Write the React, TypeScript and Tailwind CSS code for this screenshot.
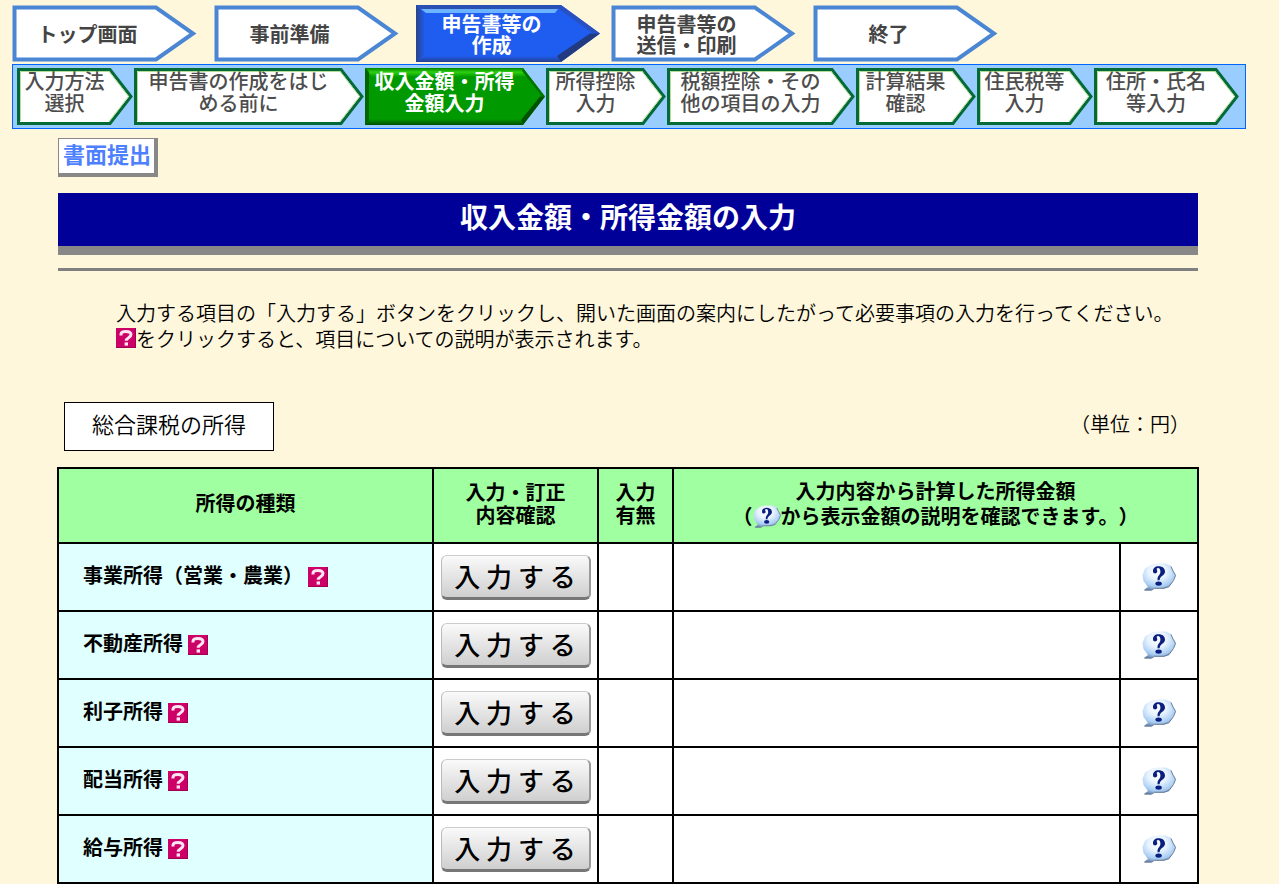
import React from 'react';
import clsx from 'clsx';

type Step = { label: string; width: number; size: string; active?: boolean };

const mainSteps: Step[] = [
  { label: 'トップ画面', width: 185, size: 'w-[185px]' },
  { label: '事前準備', width: 185, size: 'w-[185px]' },
  { label: '申告書等の\n作成', width: 185, size: 'w-[185px]', active: true },
  { label: '申告書等の\n送信・印刷', width: 185, size: 'w-[185px]' },
  { label: '終了', width: 185, size: 'w-[185px]' },
];

const subSteps: Step[] = [
  { label: '入力方法\n選択', width: 117, size: 'w-[117px]' },
  { label: '申告書の作成をはじ\nめる前に', width: 231, size: 'w-[231px]' },
  { label: '収入金額・所得\n金額入力', width: 181, size: 'w-[181px]', active: true },
  { label: '所得控除\n入力', width: 121, size: 'w-[121px]' },
  { label: '税額控除・その\n他の項目の入力', width: 189, size: 'w-[189px]' },
  { label: '計算結果\n確認', width: 121, size: 'w-[121px]' },
  { label: '住民税等\n入力', width: 117, size: 'w-[117px]' },
  { label: '住所・氏名\n等入力', width: 146, size: 'w-[146px]' },
];

const incomeTypes = ['事業所得（営業・農業） ', '不動産所得 ', '利子所得 ', '配当所得 ', '給与所得 '];

const MainArrow: React.FC<{ width: number; active?: boolean }> = ({ width: w, active }) => (
  <svg className="absolute inset-0" width={w} height="57" aria-hidden="true">
    {active ? (
      <>
        <defs>
          <linearGradient id="main-left" x1="0" x2="1">
            <stop offset="0" stopColor="#2a4488" />
            <stop offset="1" stopColor="#2058e4" />
          </linearGradient>
          <linearGradient id="main-bottom" x1="0" y1="1" x2="0" y2="0">
            <stop offset="0" stopColor="#263f8c" />
            <stop offset="1" stopColor="#1f5cf0" />
          </linearGradient>
        </defs>
        <path d={`M0 0H${w - 40}L${w - 1} 28.5L${w - 40} 57H0Z`} fill="#1f5cf0" />
        <path d={`M0 0H${w - 40}L${w - 43} 4H5Z`} fill="#2a50b4" />
        <path d={`M5 4H${w - 43}L${w - 46} 8H10Z`} fill="#6cb4ff" />
        <path d="M0 0L8 8V50L0 57Z" fill="url(#main-left)" />
        <path d={`M0 57L7 51H${w - 44}L${w - 40} 57Z`} fill="url(#main-bottom)" />
        <path d={`M${w - 40} 0L${w - 1} 28.5L${w - 8} 28.5L${w - 42} 4Z`} fill="#2850c0" />
        <path d={`M${w - 1} 28.5L${w - 40} 57L${w - 44} 51L${w - 11} 28.5Z`} fill="#213a80" />
      </>
    ) : (
      <path
        d={`M2.5 2.5H${w - 41}L${w - 4} 28.5L${w - 41} 54.5H2.5Z`}
        fill="#ffffff"
        stroke="#4a86d4"
        strokeWidth="4"
      />
    )}
  </svg>
);

const SubArrow: React.FC<{ width: number; active?: boolean }> = ({ width: w, active }) => (
  <svg className="absolute inset-0" width={w} height="57" aria-hidden="true">
    {active ? (
      <>
        <defs>
          <linearGradient id="sub-top" x1="0" y1="0" x2="0" y2="1">
            <stop offset="0" stopColor="#008000" />
            <stop offset="0.45" stopColor="#2ed010" />
            <stop offset="1" stopColor="#009900" />
          </linearGradient>
          <linearGradient id="sub-bottom" x1="0" y1="1" x2="0" y2="0">
            <stop offset="0" stopColor="#004d00" />
            <stop offset="1" stopColor="#009900" />
          </linearGradient>
        </defs>
        <path d={`M0 0H${w - 23}L${w - 1} 28.5L${w - 23} 57H0Z`} fill="#009900" />
        <path d={`M0 0H${w - 23}L${w - 20} 9H7Z`} fill="url(#sub-top)" />
        <path d="M0 0L4 4V53L0 57Z" fill="#006600" />
        <path d={`M0 57L5 51H${w - 26}L${w - 23} 57Z`} fill="url(#sub-bottom)" />
        <path d={`M${w - 23} 0L${w - 1} 28.5H${w - 4}L${w - 24} 3Z`} fill="#007400" />
        <path d={`M${w - 1} 28.5L${w - 23} 57L${w - 25} 52L${w - 6} 28.5Z`} fill="#005200" />
      </>
    ) : (
      <>
        <path
          d={`M1.5 1.5H${w - 24}L${w - 3} 28.5L${w - 24} 55.5H1.5Z`}
          fill="#ffffff"
          stroke="#046a38"
          strokeWidth="3"
        />
        <path d={`M3.5 53V3.5H${w - 25}L${w - 5.5} 28.5L${w - 25} 53.5`} fill="none" stroke="#b4dc96" />
      </>
    )}
  </svg>
);

const HelpMark: React.FC<{ className?: string }> = ({ className }) => (
  <svg className={clsx('inline-block h-5 w-5', className)} viewBox="0 0 20 20" aria-hidden="true">
    <rect width="20" height="20" fill="#cc0066" />
    <path d="M0 19.5H20M19.5 0V20" stroke="#a00050" />
    <path
      d="M5 7.6V6.2C5 4.2 6.6 3.4 10 3.4C13.4 3.4 15 4.4 15 6.6C15 10 10.2 9.4 10.2 12.8"
      fill="none"
      stroke="#ffe4f2"
      strokeWidth="3"
    />
    <rect x="8.6" y="14.4" width="3.4" height="3.2" fill="#ffe4f2" />
  </svg>
);

const BubbleMark: React.FC<{ className: string; id: string }> = ({ className, id }) => (
  <svg className={className} viewBox="0 0 34 28" aria-hidden="true">
    <defs>
      <radialGradient id={id} cx="0.45" cy="0.3" r="0.7">
        <stop offset="0" stopColor="#ffffff" />
        <stop offset="0.4" stopColor="#e8f3fe" />
        <stop offset="0.8" stopColor="#a9cdf3" />
        <stop offset="1" stopColor="#6c8cb4" />
      </radialGradient>
    </defs>
    <path
      d="M10 1.5L16 .5H24L29 3L31 8L34 12L31 18L27 24L22 25.5H12L9 27.5H2.5V26.5L6 24L1.5 18L.5 12L3 5.5Z"
      fill={`url(#${id})`}
    />
    <path d="M2.5 27H10L12.5 25.3H22L27 23.5L31.5 17.5L33.5 12.5L31 8L29 3.5" fill="none" stroke="#6a7c98" />
    <path
      d="M11 8.4C10.8 5.2 13 3.2 16.6 3.2C20.6 3.2 23 5.4 23 8.6C23 12.8 17.8 12.8 17.6 17.2H15.6C15 12.6 18.6 12.4 18.4 8.6C18.4 6.4 17.6 5 16 5C14.8 5 14.4 5.8 15 7C15.8 8.6 15 10.4 13.2 10.4C12 10.4 11 9.6 11 8.4Z"
      fill="#0a1f80"
    />
    <ellipse cx="16.6" cy="20.6" rx="3.2" ry="2.2" fill="#0a1f80" />
  </svg>
);

const App: React.FC = () => {
  return (
    <div className="min-h-screen bg-[#fff7dc] pt-[5px] font-['Noto_Sans_CJK_JP',sans-serif] text-black [text-spacing-trim:space-all]">
      <nav aria-label="手順" className="pl-3">
        <ol className="flex gap-[17px] pb-[2px]">
          {mainSteps.map((step) => (
            <li
              key={step.label}
              className={clsx(
                'relative flex h-[57px] shrink-0 items-center justify-center pr-[34px] text-center text-[20px] leading-[21px] font-bold',
                step.size,
                step.active ? '-mr-[7px] text-white' : 'text-[#444444]'
              )}
            >
              <MainArrow width={step.width} active={step.active} />
              <span className="relative whitespace-pre">{step.label}</span>
            </li>
          ))}
        </ol>
        <ol className="mr-[33px] flex h-[65px] border border-[#0066ff] bg-[#99ccff] pt-[3px] pl-1">
          {subSteps.map((step) => (
            <li
              key={step.label}
              className={clsx(
                'relative flex h-[57px] shrink-0 justify-center pt-[2px] pr-[22px] text-center text-[20px] leading-[22px]',
                step.size,
                step.active ? 'font-bold text-white' : 'font-medium text-[#4d4d4d]'
              )}
            >
              <SubArrow width={step.width} active={step.active} />
              <span className="relative whitespace-pre">{step.label}</span>
            </li>
          ))}
        </ol>
      </nav>

      <main className="pt-[9px] pr-[81px] pl-[58px]">
        <p className="h-[39px] w-[100px] border-t border-r-4 border-b-4 border-l border-[#888888] bg-white pl-1 text-[22px] leading-[28px] font-bold text-[#4d80ff]">
          書面提出
        </p>

        <h1 className="mt-4 h-[62px] border-b-9 border-[#888888] bg-[#000099] text-center text-[28px] leading-[46px] font-bold text-white">
          収入金額・所得金額の入力
        </h1>
        <hr className="mt-[13px] border-t-3 border-[#808080]" />

        <div className="mt-[29px] pl-[58px] text-[20px] leading-[26px] font-[350]">
          <p>入力する項目の「入力する」ボタンをクリックし、開いた画面の案内にしたがって必要事項の入力を行ってください。</p>
          <p>
            <HelpMark className="align-[-1px]" />
            をクリックすると、項目についての説明が表示されます。
          </p>
        </div>

        <div className="mt-[50px] flex items-start justify-between pr-2 pl-[6px] font-[350]">
          <h2 className="h-[49px] w-[210px] border border-black bg-white text-center text-[22px] leading-[40px]">
            総合課税の所得
          </h2>
          <p className="text-[20px] leading-[44px]">（単位：円）</p>
        </div>

        <table className="mt-4 -ml-px w-[calc(100%+2px)] table-fixed border-collapse bg-white text-[20px] font-bold [&_td]:border-2 [&_td]:border-black [&_th]:border-2 [&_th]:border-black">
          <colgroup>
            <col className="w-[375px]" />
            <col className="w-[165px]" />
            <col className="w-[75px]" />
            <col />
            <col className="w-[78px]" />
          </colgroup>
          <thead className="bg-[#a0ffa0] leading-[23px] whitespace-pre-line">
            <tr className="h-[75px] [&>th]:pb-[6px]">
              <th scope="col">所得の種類</th>
              <th scope="col">{'入力・訂正\n内容確認'}</th>
              <th scope="col">{'入力\n有無'}</th>
              <th scope="col" colSpan={2} className="leading-[25px]">
                {'入力内容から計算した所得金額\n（'}
                <BubbleMark id="bubble-head" className="inline-block h-[23px] w-[28px] align-[-4px]" />
                から表示金額の説明を確認できます。）
              </th>
            </tr>
          </thead>
          <tbody>
            {incomeTypes.map((name, i) => (
              <tr key={name} className="h-[68px]">
                <th scope="row" className="bg-[#e0ffff] pb-1 pl-6 text-left">
                  {name}
                  <button type="button" aria-label="項目の説明">
                    <HelpMark className="align-[-4px]" />
                  </button>
                </th>
                <td className="text-center">
                  <button
                    type="button"
                    className="mx-auto block h-[45px] w-[150px] rounded-md border-t border-r-2 border-b-3 border-l border-t-[#cccccc] border-r-[#999999] border-b-[#777777] border-l-[#bbbbbb] bg-linear-to-b from-[#fafafa] to-[#cfcfcf] text-[26px] leading-[40px] font-medium whitespace-nowrap"
                  >
                    入 力 す る
                  </button>
                </td>
                <td></td>
                <td></td>
                <td className="pb-1 text-center">
                  <button type="button" aria-label="表示金額の説明" className="align-middle">
                    <BubbleMark id={`bubble-${i}`} className="h-[28px] w-[34px]" />
                  </button>
                </td>
              </tr>
            ))}
          </tbody>
        </table>
      </main>
    </div>
  );
};

export default App;
